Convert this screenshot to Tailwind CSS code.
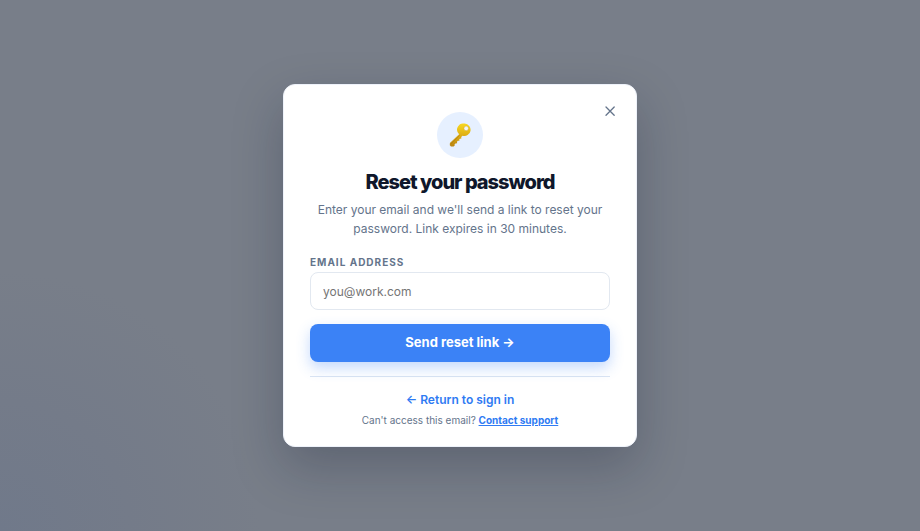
<!DOCTYPE html>
<html lang="en">

<head>
    <meta charset="UTF-8" />
    <meta name="viewport" content="width=device-width, initial-scale=1.0" />
    <title>Reset your password</title>
    <script src="https://cdn.jsdelivr.net/npm/@tailwindcss/browser@4"></script>
</head>

<body class="min-h-screen flex items-center justify-center p-4 bg-[#787e89] bg-[radial-gradient(circle_at_0%_100%,#70798a_0px,#747b89_130px,#787e89_260px)] font-['Inter',sans-serif]">

    <!-- Modal -->
    <main role="dialog" aria-labelledby="title"
        class="relative w-full max-w-[354px] bg-white border border-[#eef2fa] rounded-xl px-[26px] pt-[27px] pb-4 text-center shadow-[0_20px_50px_rgba(15,23,42,0.25)]">
        <button type="button" aria-label="Close" class="absolute top-4 right-4 size-5 flex items-center justify-center text-[#64748b]">
            <svg class="size-3" viewBox="0 0 12 12" fill="none" stroke="currentColor" stroke-width="1.3" stroke-linecap="round">
                <path d="M2 2l8.200 8.200M10.200 2l-8.200 8.200" />
            </svg>
        </button>

        <div class="mx-auto size-[46px] rounded-full bg-[#e6f0ff] flex items-center justify-center">
            <!-- Key -->
            <svg class="size-6" viewBox="0 0 24 24">
                <defs>
                    <linearGradient id="gold" x1="0" y1="0" x2="0" y2="1">
                        <stop offset="0" stop-color="#f8d820" />
                        <stop offset="0.5" stop-color="#dfb016" />
                        <stop offset="1" stop-color="#b98412" />
                    </linearGradient>
                </defs>
                <path fill="url(#gold)"
                    d="M16.700.6a6.200 6.200 0 1 1-2.200 12.100l-1.300 1.300.2 1.500-1.500.2-.6.600.1 1.400-1.500.1-.9.900.1 1.500-1.600.2-.9.900.1 1.300-1.100 1-2.600-.1-1.200-1.200.1-2.200 9.200-8.900A6.200 6.200 0 0 1 16.700.6z" />
                <path d="M3 20.800l8.700-8.500" stroke="#a06f12" stroke-width="0.500" fill="none" />
                <circle cx="18.200" cy="5.400" r="2.300" fill="#f4f6f4" stroke="#c99c1c" stroke-width="0.400" />
            </svg>
        </div>

        <h1 id="title" class="mt-2.5 text-xl leading-7 font-extrabold tracking-tighter text-slate-900">Reset your password</h1>
        <p class="mt-1 text-xs leading-[19px] text-[#64748b]">Enter your email and we'll send a link to reset your password. Link expires in 30 minutes.</p>

        <form class="mt-4">
            <label for="email" class="block text-left text-[10px] leading-4 font-bold tracking-widest uppercase text-[#64748b]">Email address</label>
            <input id="email" type="email" placeholder="you@work.com"
                class="mt-0.5 block w-full h-[38px] px-3 rounded-lg border border-[#e2e8f0] bg-white text-[12px] text-slate-900 placeholder:text-[#757575]" />
            <button type="submit"
                class="mt-3.5 w-full h-[38px] rounded-lg bg-[#3b82f6] text-[13px] font-bold text-white shadow-[0_6px_14px_rgba(59,130,246,0.3)]">Send reset link →</button>
        </form>

        <div class="mt-3.5 pt-[13px] border-t border-[#dbe5f3]">
            <a href="#" class="block text-xs leading-5 font-semibold text-[#2f7bf3]">← Return to sign in</a>
            <p class="text-[10px] leading-5 text-[#64748b]">Can't access this email? <a href="#" class="font-bold text-[#2f7bf3] underline">Contact support</a></p>
        </div>
    </main>

</body>

</html>
